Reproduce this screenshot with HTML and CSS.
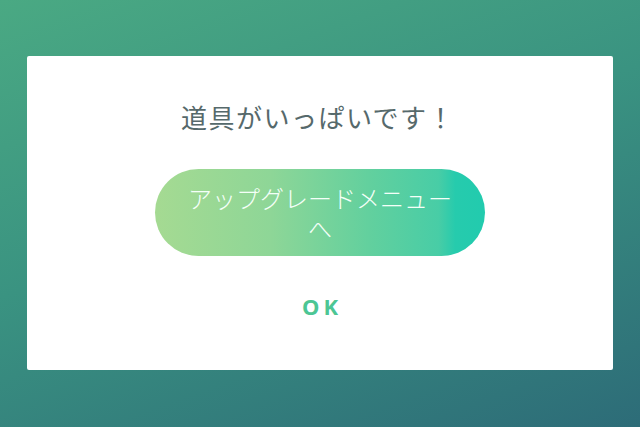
FILE: index.html
```html
<!DOCTYPE html>
<html lang="ja">
<head>
  <meta charset="UTF-8">
  <title>道具がいっぱいです</title>
  <meta name="viewport" content="width=device-width, initial-scale=1.0">
  <link rel="stylesheet" href="styles.css">
</head>
<body>

  <div class="screen">
    <!-- ダイアログ -->
    <div class="dialog">
      <div class="title">道具がいっぱいです！</div>
      <button class="upgrade-btn">アップグレードメニューへ</button>
      <button class="ok-btn">OK</button>
    </div>
  </div>

</body>
</html>
```

FILE: styles.css
```css
/* 全体 */
body {
  margin: 0;
  font-family: "Noto Sans CJK JP", "Noto Sans", sans-serif;
}

/* 背景グラデーション */
.screen {
  width: 640px;
  height: 427px;
  box-sizing: border-box;
  padding: 56px 27px 0;
  background: linear-gradient(160deg, #4aa983 0%, #3a9381 45%, #2d6c78 100%);
}

/* ダイアログ本体 */
.dialog {
  height: 314px;
  background: #fff;
  border-radius: 2px;
  display: flex;
  flex-direction: column;
  align-items: center;
  padding-top: 42px;
  box-sizing: border-box;
}

.title {
  font-size: 26px;
  font-weight: 400;
  line-height: 38px;
  color: #56696b;
  letter-spacing: 1.5px;
  margin-right: 4px;
}

/* アップグレードボタン */
.upgrade-btn {
  margin-top: 33px;
  width: 330px;
  height: 87px;
  padding: 0 32px;
  border: none;
  border-radius: 44px;
  background: linear-gradient(90deg, #a5da92 0%, #8ed697 35%, #62d09e 65%, #48cda6 86%, #26cbad 91%, #22cbae 100%);
  color: #f4fff8;
  font-family: inherit;
  font-size: 24px;
  font-weight: 300;
  line-height: 30px;
  cursor: pointer;
}

/* OKボタン */
.ok-btn {
  margin-top: 35px;
  border: none;
  background: none;
  color: #4cc694;
  font-family: "Noto Sans", sans-serif;
  font-size: 22px;
  font-weight: bold;
  letter-spacing: 4px;
  padding: 0 0 0 4px;
  cursor: pointer;
}
```
